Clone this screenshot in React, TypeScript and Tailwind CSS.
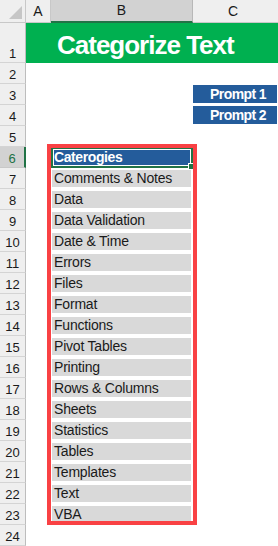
import React from "react";

const cats = [
  "Comments & Notes",
  "Data",
  "Data Validation",
  "Date & Time",
  "Errors",
  "Files",
  "Format",
  "Functions",
  "Pivot Tables",
  "Printing",
  "Rows & Columns",
  "Sheets",
  "Statistics",
  "Tables",
  "Templates",
  "Text",
  "VBA",
];

function RH({ n, tall, active }: { n: number; tall?: boolean; active?: boolean }) {
  const h = tall ? "h-[40px]" : "h-[21px]";
  if (active) {
    return (
      <div
        className={`w-[26px] shrink-0 ${h} flex items-end justify-center pb-[2px] text-[13px] leading-none bg-[#d2d2d2] text-[#217346] border-b border-b-[#c8c8c8] border-r-2 border-r-[#217346]`}
      >
        {n}
      </div>
    );
  }
  return (
    <div
      className={`w-[26px] shrink-0 ${h} flex items-end justify-center pb-[2px] text-[13px] leading-none bg-[#efefef] text-[#1a1a1a] border-b border-b-[#d4d4d4] border-r border-r-[#bdbdbd]`}
    >
      {n}
    </div>
  );
}

function Prompt({ label }: { label: string }) {
  return (
    <div className="flex-1 pt-[1px] pr-[1px]">
      <div className="h-[18px] bg-[#245c9b] text-white font-bold text-[14px] leading-[18px] tracking-[-0.6px] text-right pr-[11px]">
        {label}
      </div>
    </div>
  );
}

export default function App() {
  const rows: number[] = [];
  for (let i = 2; i <= 24; i++) rows.push(i);

  return (
    <div className="relative w-[278px] h-[546px] overflow-hidden bg-white font-['Liberation_Sans',Arial,sans-serif] text-[#1a1a1a]">
      {/* column headers */}
      <div className="flex h-[23px] bg-[#efefef] text-[14px]">
        <div className="w-[26px] shrink-0 border-r border-b border-[#c8c8c8] flex items-end justify-end pr-[3px] pb-[3px]">
          <svg width="13" height="13" viewBox="0 0 13 13">
            <polygon points="13,0 13,13 0,13" fill="#c6c6c6" />
          </svg>
        </div>
        <div className="w-[25px] shrink-0 border-r border-b border-[#c8c8c8] flex items-center justify-center">
          A
        </div>
        <div className="w-[142px] shrink-0 bg-[#d2d2d2] border-r border-r-[#b8b8b8] border-b-2 border-b-[#217346] flex items-center justify-center">
          B
        </div>
        <div className="flex-1 border-b border-[#c8c8c8] flex items-center justify-center pr-[5px]">
          C
        </div>
      </div>

      {/* row 1 */}
      <div className="flex h-[40px]">
        <RH n={1} tall />
        <div className="flex-1 bg-[#00b050] text-white font-bold text-[26px] leading-none tracking-[-1px] pl-[31px] pt-[4px] flex items-center">
          Categorize Text
        </div>
      </div>

      {rows.map((n) => {
        const catIdx = n - 7;
        return (
          <div key={n} className="flex h-[21px]">
            <RH n={n} active={n === 6} />
            <div className="w-[25px] shrink-0" />
            {n === 6 ? (
              <div className="relative w-[142px] shrink-0 h-full border-2 border-[#217346] p-[1px] bg-white">
                <div className="h-full bg-[#245c9b] text-white font-bold text-[14px] leading-[15px] tracking-[-0.4px]">
                  Caterogies
                </div>
                <div className="absolute right-[-4px] bottom-[-4px] w-[7px] h-[7px] bg-[#217346] border border-white" />
              </div>
            ) : catIdx >= 0 && catIdx < cats.length ? (
              <div className="w-[142px] shrink-0 h-full pl-[1px] pr-[2px] py-[2px]">
                <div className="h-full bg-[#d9d9d9] pl-[2px] text-[14px] leading-[17px] tracking-[-0.2px] whitespace-nowrap">
                  {cats[catIdx]}
                </div>
              </div>
            ) : (
              <div className="w-[142px] shrink-0" />
            )}
            {n === 3 ? (
              <Prompt label="Prompt 1" />
            ) : n === 4 ? (
              <Prompt label="Prompt 2" />
            ) : (
              <div className="flex-1" />
            )}
          </div>
        );
      })}

      {/* red outline shape */}
      <div className="absolute left-[47px] top-[144px] w-[150px] h-[381px] border-4 border-[#f94144] pointer-events-none" />
    </div>
  );
}
